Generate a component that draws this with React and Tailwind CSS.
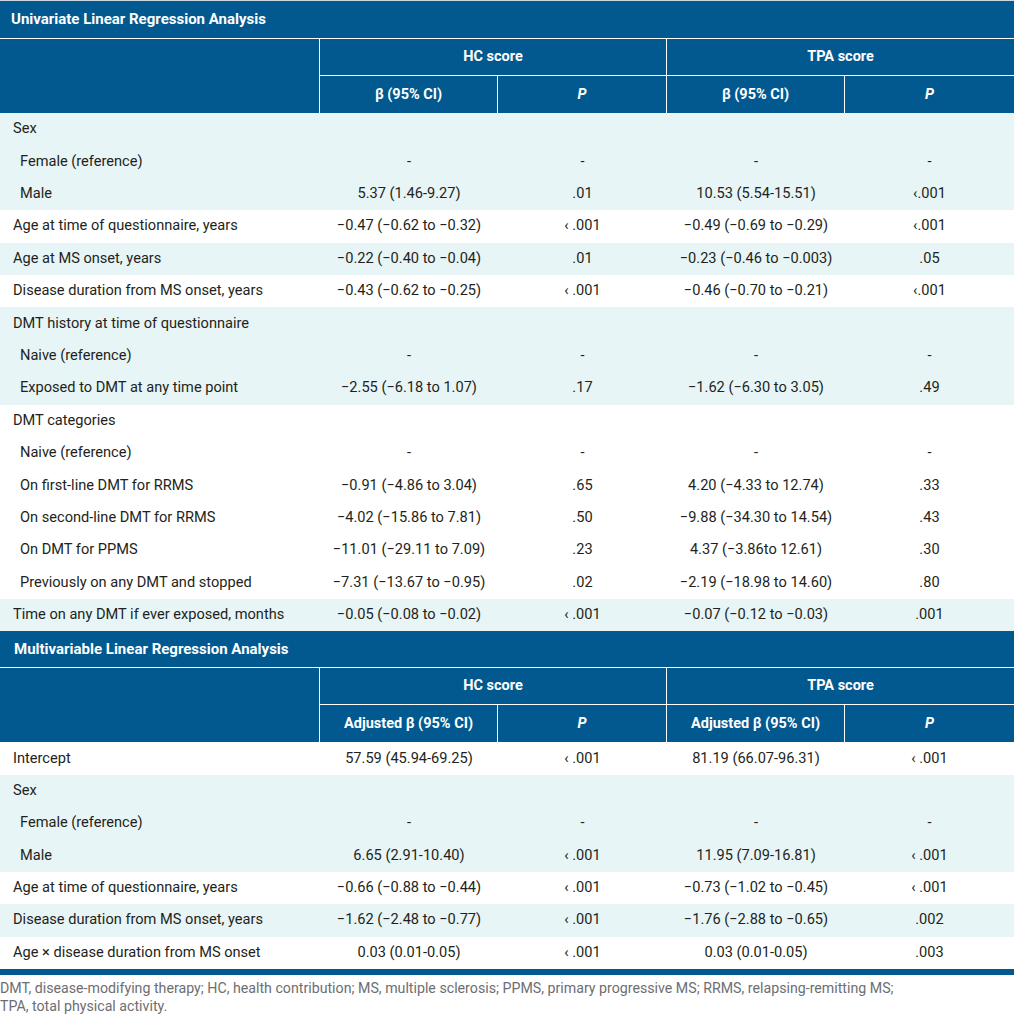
const L = 'bg-[#e7f5f6]';
const W = 'bg-white';

const uniRows = [
  { bg: L, rows: [
    { label: 'Sex' },
    { label: 'Female (reference)', sub: true, v: ['-', '-', '-', '-'] },
    { label: 'Male', sub: true, v: ['5.37 (1.46-9.27)', '.01', '10.53 (5.54-15.51)', '‹.001'] },
  ] },
  { bg: W, rows: [
    { label: 'Age at time of questionnaire, years', v: ['−0.47 (−0.62 to −0.32)', '‹ .001', '−0.49 (−0.69 to −0.29)', '‹.001'] },
  ] },
  { bg: L, rows: [
    { label: 'Age at MS onset, years', v: ['−0.22 (−0.40 to −0.04)', '.01', '−0.23 (−0.46 to −0.003)', '.05'] },
  ] },
  { bg: W, rows: [
    { label: 'Disease duration from MS onset, years', v: ['−0.43 (−0.62 to −0.25)', '‹ .001', '−0.46 (−0.70 to −0.21)', '‹.001'] },
  ] },
  { bg: L, rows: [
    { label: 'DMT history at time of questionnaire' },
    { label: 'Naive (reference)', sub: true, v: ['-', '-', '-', '-'] },
    { label: 'Exposed to DMT at any time point', sub: true, v: ['−2.55 (−6.18 to 1.07)', '.17', '−1.62 (−6.30 to 3.05)', '.49'] },
  ] },
  { bg: W, rows: [
    { label: 'DMT categories' },
    { label: 'Naive (reference)', sub: true, v: ['-', '-', '-', '-'] },
    { label: 'On first-line DMT for RRMS', sub: true, v: ['−0.91 (−4.86 to 3.04)', '.65', '4.20 (−4.33 to 12.74)', '.33'] },
    { label: 'On second-line DMT for RRMS', sub: true, v: ['−4.02 (−15.86 to 7.81)', '.50', '−9.88 (−34.30 to 14.54)', '.43'] },
    { label: 'On DMT for PPMS', sub: true, v: ['−11.01 (−29.11 to 7.09)', '.23', '4.37 (−3.86to 12.61)', '.30'] },
    { label: 'Previously on any DMT and stopped', sub: true, v: ['−7.31 (−13.67 to −0.95)', '.02', '−2.19 (−18.98 to 14.60)', '.80'] },
  ] },
  { bg: L, rows: [
    { label: 'Time on any DMT if ever exposed, months', v: ['−0.05 (−0.08 to −0.02)', '‹ .001', '−0.07 (−0.12 to −0.03)', '.001'] },
  ] },
];

const multiRows = [
  { bg: W, rows: [
    { label: 'Intercept', v: ['57.59 (45.94-69.25)', '‹ .001', '81.19 (66.07-96.31)', '‹ .001'] },
  ] },
  { bg: L, rows: [
    { label: 'Sex' },
    { label: 'Female (reference)', sub: true, v: ['-', '-', '-', '-'] },
    { label: 'Male', sub: true, v: ['6.65 (2.91-10.40)', '‹ .001', '11.95 (7.09-16.81)', '‹ .001'] },
  ] },
  { bg: W, rows: [
    { label: 'Age at time of questionnaire, years', v: ['−0.66 (−0.88 to −0.44)', '‹ .001', '−0.73 (−1.02 to −0.45)', '‹ .001'] },
  ] },
  { bg: L, rows: [
    { label: 'Disease duration from MS onset, years', v: ['−1.62 (−2.48 to −0.77)', '‹ .001', '−1.76 (−2.88 to −0.65)', '.002'] },
  ] },
  { bg: W, rows: [
    { label: 'Age × disease duration from MS onset', v: ['0.03 (0.01-0.05)', '‹ .001', '0.03 (0.01-0.05)', '.003'] },
  ] },
];

function Header({ title, beta, titleH, titlePad }) {
  return (
    <div className="grid grid-cols-[319px_177px_168px_177px_1fr] gap-px bg-white text-white font-bold text-[14.5px]">
      <div className={`col-span-5 bg-[#02598f] flex items-center text-[15px] ${titleH} ${titlePad}`}>
        {title}
      </div>
      <div className="row-span-2 bg-[#02598f]" />
      <div className="col-span-2 h-[36px] bg-[#02598f] flex items-center justify-center">HC score</div>
      <div className="col-span-2 h-[36px] bg-[#02598f] flex items-center justify-center">TPA score</div>
      <div className="h-[37px] bg-[#02598f] flex items-center justify-center">{beta}</div>
      <div className="h-[37px] bg-[#02598f] flex items-center justify-center italic">P</div>
      <div className="h-[37px] bg-[#02598f] flex items-center justify-center">{beta}</div>
      <div className="h-[37px] bg-[#02598f] flex items-center justify-center italic">P</div>
    </div>
  );
}

function Body({ groups }) {
  return (
    <div className="text-[14.6px] text-[#231f20]">
      {groups.map((g, gi) => (
        <div key={gi} className={g.bg}>
          {g.rows.map((r, ri) => (
            <div key={ri} className="grid grid-cols-[320px_178px_169px_178px_1fr] h-[32.4px] items-center">
              <div className={r.sub ? 'pl-[20px]' : 'pl-[13px]'}>{r.label}</div>
              {(r.v || ['', '', '', '']).map((x, i) => (
                <div key={i} className="text-center">{x}</div>
              ))}
            </div>
          ))}
        </div>
      ))}
    </div>
  );
}

export default function App() {
  return (
    <div className="w-[1014px] bg-white" style={{ fontFamily: 'Roboto, "Noto Sans", sans-serif' }}>
      <div className="h-px bg-[#c9d6e0]" />
      <Header title="Univariate Linear Regression Analysis" beta="β (95% CI)" titleH="h-[37px]" titlePad="pl-[11px]" />
      <Body groups={uniRows} />
      <Header title="Multivariable Linear Regression Analysis" beta="Adjusted β (95% CI)" titleH="h-[36px]" titlePad="pl-[14px]" />
      <Body groups={multiRows} />
      <div className="h-[6px] bg-[#02598f]" />
      <div className="pt-[4px] text-[14.2px] leading-[18px] text-[#6d6e71]">
        DMT, disease-modifying therapy; HC, health contribution; MS, multiple sclerosis; PPMS, primary progressive MS; RRMS, relapsing-remitting MS;
        <br />
        TPA, total physical activity.
      </div>
    </div>
  );
}
